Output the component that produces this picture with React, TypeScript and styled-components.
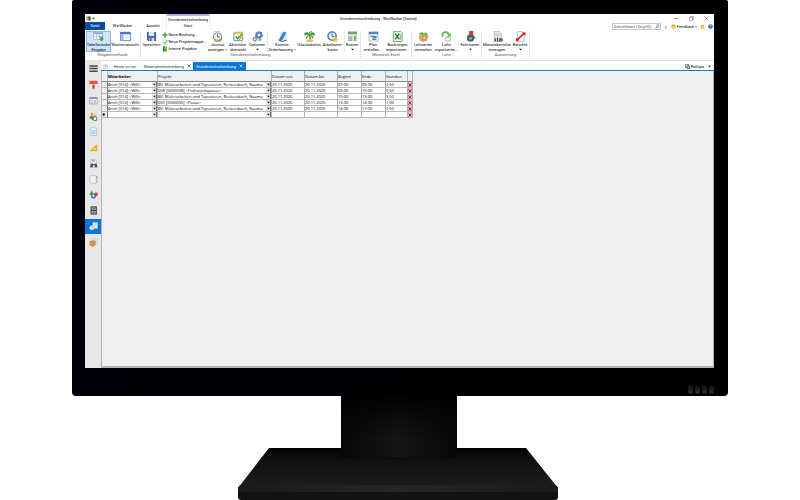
import React from "react";
import styled, { createGlobalStyle } from "styled-components";

const GlobalStyle = createGlobalStyle`
  *, *::before, *::after { box-sizing: border-box; }
  body { margin: 0; background: #fff; }
  button, input, select { font: inherit; color: inherit; margin: 0; padding: 0; border: 0; background: none; border-radius: 0; outline: none; }
  svg { display: block; flex: none; }
`;

const Page = styled.main`
  min-height: 100vh;
  display: flex;
  flex-direction: column;
  align-items: center;
  font: 4px/5px Roboto, "Liberation Sans", sans-serif;
  color: #000;
`;

const Bezel = styled.div`
  width: 82%;
  flex: 1;
  display: flex;
  flex-direction: column;
  padding: 14px 14px 0 13px;
  border-radius: 2px 2px 4px 4px;
  background: linear-gradient(90deg, #00000b 0%, #000005 35%, #000 60%);
`;

const Chin = styled.div`
  height: 28px;
  flex: none;
  display: flex;
  justify-content: flex-end;
  align-items: flex-end;
  gap: 2px;
  padding-bottom: 2px;
`;

const Vent = styled.span`
  width: 5px;
  height: 8px;
  border-radius: 1px;
  border: 1px solid #1c1c1c;
  background: linear-gradient(#111, #333);
`;

const Screen = styled.div`
  flex: 1;
  display: flex;
  flex-direction: column;
  background: #fff;
  overflow: hidden;
`;

const Header = styled.header`
  height: 16px;
  flex: none;
  display: grid;
  grid-template-columns: 6fr auto 7fr;
`;

const HeaderLeft = styled.div`
  display: grid;
  grid-template-columns: 20px 35px 26px 44px;
  grid-template-rows: 8px 8px;
`;

const QuickAccess = styled.div`
  grid-column: 1 / 4;
  display: flex;
  align-items: center;
  gap: 1px;
  padding-left: 1px;
`;

const ContextTitle = styled.div`
  border: 1px solid #eeecf5;
  border-top: 2px solid #b9aee0;
  border-bottom: 0;
  text-align: center;
  white-space: nowrap;
  line-height: 7px;
`;

const RibbonTab = styled.button<{ $kind?: "file" | "active" }>`
  line-height: 8px;
  white-space: nowrap;
  text-align: center;
  background: ${(p) => (p.$kind === "file" ? "#0a4b9c" : "#fff")};
  color: ${(p) => (p.$kind === "file" ? "#fff" : "#000")};
  border: ${(p) => (p.$kind === "active" ? "1px solid #eeecf5" : "0")};
  border-top: 0;
  border-bottom: 0;
`;

const WindowTitle = styled.h1`
  margin: 0;
  font: inherit;
  line-height: 10px;
  white-space: nowrap;
`;

const HeaderRight = styled.div`
  display: flex;
  flex-direction: column;
  align-items: flex-end;
`;

const WindowButtons = styled.div`
  height: 9px;
  display: flex;
  align-items: center;
  gap: 10px;
  padding-right: 5px;
`;

const Tools = styled.div`
  height: 7px;
  display: flex;
  align-items: center;
  gap: 3px;
  padding-right: 1px;
`;

const Search = styled.label`
  width: 49px;
  height: 7px;
  display: flex;
  align-items: center;
  border: 1px solid #c8c8c8;
  input { flex: 1; min-width: 0; height: 5px; padding-left: 1px; }
  input::placeholder { color: #555; opacity: 1; }
`;

const IconButton = styled.button`
  display: flex;
  align-items: center;
  gap: 1px;
  white-space: nowrap;
`;

const Ribbon = styled.div`
  height: 31px;
  flex: none;
  display: flex;
  padding: 1px 0 2px;
  border-bottom: 1px solid #e4e4e4;
`;

const Group = styled.section<{ $width: number }>`
  width: ${(p) => p.$width}px;
  display: flex;
  flex-direction: column;
  border-right: 1px solid #e6e6e6;
`;

const GroupBody = styled.div`
  height: 23px;
  display: flex;
  justify-content: center;
`;

const GroupName = styled.h2`
  margin: 0;
  font: inherit;
  color: #555;
  text-align: center;
  line-height: 6px;
  white-space: nowrap;
`;

const Command = styled.button<{ $width: number; $on?: boolean }>`
  width: ${(p) => p.$width}px;
  display: flex;
  flex-direction: column;
  align-items: center;
  white-space: nowrap;
  background: ${(p) => (p.$on ? "#cfe3f6" : "transparent")};
  box-shadow: ${(p) => (p.$on ? "inset 0 0 0 1px #8fbbe6" : "none")};
`;

const CommandLabel = styled.span`
  height: 5px;
  display: flex;
  align-items: center;
  gap: 1px;
`;

const Divider = styled.span`
  width: 1px;
  background: #e9e9e9;
`;

const CommandList = styled.div`
  width: 45px;
  display: flex;
  flex-direction: column;
`;

const SmallCommand = styled.button`
  height: 7px;
  display: flex;
  align-items: center;
  gap: 1px;
  white-space: nowrap;
`;

const Body = styled.div`
  flex: 1;
  display: flex;
  min-height: 0;
`;

const Sidebar = styled.nav`
  width: 16px;
  flex: none;
  background: #e7e7e7;
`;

const SideList = styled.div`
  height: 189px;
  display: grid;
  grid-template-rows: repeat(12, 1fr);
`;

const SideButton = styled.button<{ $on?: boolean }>`
  display: flex;
  align-items: center;
  justify-content: center;
  background: ${(p) => (p.$on ? "#0878d8" : "transparent")};
`;

const Content = styled.div`
  flex: 1;
  min-width: 0;
  display: flex;
  flex-direction: column;
`;

const TabBar = styled.div`
  height: 10px;
  flex: none;
  display: flex;
  align-items: stretch;
  padding: 1px 0 0 2px;
  border-bottom: 1px solid #1b78c2;
`;

const DocTab = styled.button<{ $on?: boolean; $width: number }>`
  width: ${(p) => p.$width}px;
  display: flex;
  align-items: center;
  justify-content: center;
  gap: 3px;
  white-space: nowrap;
  color: ${(p) => (p.$on ? "#fff" : "#333")};
  background: ${(p) => (p.$on ? "#0878d8" : "transparent")};
`;

const Spacer = styled.span`
  flex: 1;
`;

const Workspace = styled.div`
  flex: 1;
  background: #efefef;
  border: solid #b5b5b5;
  border-width: 0 1px 2px 1px;
`;

const Sheet = styled.table`
  width: 311px;
  font-family: "Open Sans", "Noto Sans", sans-serif;
  table-layout: fixed;
  border-collapse: separate;
  border-spacing: 0;
  th, td {
    padding: 0;
    font-weight: 400;
    text-align: left;
    white-space: nowrap;
    overflow: hidden;
    border-right: 1px solid #b0b0b0;
    border-bottom: 1px solid #b8b8b8;
  }
  thead th { height: 11px; border-bottom-color: #888; }
  thead th:nth-child(2) { font-weight: 700; color: #000; }
  tbody td { height: 6px; background: #fff; }
  tbody th { height: 6px; background: #efefef; border-right-color: #777; }
  tbody td:last-child { background: #c4c4c4; }
`;

const Cell = styled.div`
  height: 5px;
  display: flex;
  align-items: center;
  input, select {
    flex: 1;
    width: 100%;
    min-width: 0;
    height: 5px;
    line-height: 5px;
    appearance: none;
    overflow: hidden;
  }
`;

const DropMark = styled.span`
  width: 5px;
  height: 5px;
  display: flex;
  align-items: center;
  justify-content: center;
  background: #e4e4e4;
  border-right: 1px solid #777;
  pointer-events: none;
`;

const Stand = styled.div`
  height: 104px;
  flex: none;
`;

const G = ({ s = 11, children }: { s?: number; children: React.ReactNode }) => (
  <svg width={s} height={s} viewBox="0 0 24 24" aria-hidden="true" fill="none">
    {children}
  </svg>
);

const Paper = ({ fill = "#fff" }: { fill?: string }) => (
  <path d="M5 1h11l4 4v18H5z" fill={fill} stroke="#9aa7b5" strokeWidth="1.5" />
);

const icons: Record<string, React.ReactNode> = {
  table: (
    <>
      <path d="M1 3h20v15H1z" fill="#fff" stroke="#a7b4d8" strokeWidth="2" />
      <path d="M1 3h20v4H1z" fill="#8fa5e0" />
      <path d="M1 12h20M8 6v12M14 6v12" stroke="#a7b4d8" strokeWidth="1.5" />
      <path d="M16 12h5v5h3l-5.500 6-5.500-6h3z" fill="#36a832" />
    </>
  ),
  week: (
    <>
      <path d="M1 3h22v18H1z" fill="#fff" stroke="#6386d0" strokeWidth="2" />
      <path d="M1 2h22v5H1z" fill="#4a75cf" />
      <path d="M2 7h6v13H2z" fill="#9ebaf0" />
      <path d="M11 11h9M11 15h9" stroke="#c4cee0" strokeWidth="1.500" />
    </>
  ),
  save: (
    <>
      <path d="M2 2h20v20H5l-3-3z" fill="#3f62ad" />
      <path d="M6 2h12v9H6z" fill="#dbe6f8" />
      <path d="M7 15h11v7H7z" fill="#d2d7de" />
      <path d="M9 16h3v6H9z" fill="#334a82" />
    </>
  ),
  plus: <path d="M9 2h6v7h7v6h-7v7H9v-7H2V9h7z" fill="#36a832" />,
  check: (
    <>
      <Paper />
      <path d="M7 12l4 6 10-13" stroke="#31a040" strokeWidth="3.500" />
    </>
  ),
  green: (
    <>
      <path d="M4 2h16v20H4z" fill="#49b52f" />
      <path d="M4 2h5v20H4z" fill="#247e22" />
      <path d="M12 7h5M12 12h5" stroke="#e7ffd9" strokeWidth="2" />
    </>
  ),
  journal: (
    <>
      <Paper />
      <circle cx="12" cy="13" r="9" fill="#eef2f6" stroke="#78828e" strokeWidth="2" />
      <path d="M12 7v6h5" stroke="#375f9d" strokeWidth="2" />
      <path d="M3 15l7 7M16 18h6" stroke="#e59b20" strokeWidth="3" />
      <path d="M12 18l4 4 6-7" stroke="#36a832" strokeWidth="2" />
    </>
  ),
  activity: (
    <>
      <path d="M2 3h19v18H2z" fill="#fff" stroke="#4c8cd8" strokeWidth="2" />
      <path d="M2 2h19v4H2z" fill="#f0b42c" />
      <path d="M6 12l4 5L20 6" stroke="#36a832" strokeWidth="3" />
      <path d="M13 19l9-9" stroke="#e5a52a" strokeWidth="3" />
    </>
  ),
  gears: (
    <>
      <circle cx="15" cy="9" r="6" stroke="#5277b7" strokeWidth="5" strokeDasharray="4 1" />
      <circle cx="15" cy="9" r="5" stroke="#5277b7" strokeWidth="3" />
      <circle cx="6" cy="18" r="3.500" stroke="#74879c" strokeWidth="3" />
      <circle cx="17" cy="19" r="3" fill="#80b34d" />
    </>
  ),
  pen: (
    <>
      <path d="M8 2h13v18H5z" fill="#c8e2f6" />
      <path d="M15 1l5 3-9 16-6 2 1-6z" fill="#2685d0" />
      <path d="M3 19l8 4 10-3" stroke="#2a4d79" strokeWidth="2" />
    </>
  ),
  palm: (
    <>
      <path d="M12 8c2 5 2 9 0 14" stroke="#9b6528" strokeWidth="3" />
      <path d="M12 9C7 0 2 2 0 9c4-2 8-2 12 0-5 0-8 3-7 8 2-4 4-6 7-8 4 2 6 4 7 8 3-5-1-8-7-8 5-2 8-1 12 1-1-8-8-10-12-1 0-4 2-7 5-8-5-1-7 3-5 8z" fill="#3a9d35" stroke="#3a9d35" />
      <path d="M4 20q9-3 17 0l-3 4H7z" fill="#e6c14d" />
    </>
  ),
  clock: (
    <>
      <circle cx="11" cy="11" r="9" fill="#e9f3fc" stroke="#3177bb" strokeWidth="3" />
      <path d="M11 5v7h5" stroke="#315b87" strokeWidth="2" />
      <path d="M18 12l2 4 4 1-3 3 1 4-4-2-5 2 1-4-3-3 5-1z" fill="#f2b92c" />
    </>
  ),
  costs: (
    <>
      <path d="M2 2h20v20H2z" fill="#dfe4df" />
      <path d="M2 1h20v6H2z" fill="#6fa96a" />
      <path d="M3 12h8v10H3z" fill="#939ca0" />
      <path d="M15 11h5v11h-5z" fill="#6fb85c" />
      <path d="M4 15h6M4 19h6" stroke="#eee" strokeWidth="1.500" />
    </>
  ),
  plan: (
    <>
      <path d="M2 2h20v20H2z" fill="#eef3fa" stroke="#b0bdd0" strokeWidth="2" />
      <path d="M2 2h20v5H2z" fill="#4f83c9" />
      <path d="M5 12h8" stroke="#e55431" strokeWidth="3" />
      <path d="M11 11h8v4h-8z" fill="#2f74cf" />
      <path d="M9 18h9" stroke="#249c55" strokeWidth="3" />
    </>
  ),
  excel: (
    <>
      <path d="M3 1h16l3 3v19H3z" fill="#eff8ef" stroke="#60ad67" strokeWidth="2" />
      <path d="M7 6l9 12M16 6L7 18" stroke="#218b3b" strokeWidth="3.500" />
      <path d="M19 7v12" stroke="#7abc7a" strokeWidth="2" />
    </>
  ),
  payType: (
    <>
      <path d="M2 9l10-4 11 4-3 12-9 3-8-4z" fill="#e6a262" />
      <path d="M1 5l9-3 5 6-6 3zM16 2l6 4-5 6-5-5z" fill="#75b45f" />
      <circle cx="14" cy="15" r="4" fill="#f1d3a4" stroke="#cc6d45" strokeWidth="1.500" />
    </>
  ),
  payOut: (
    <>
      <path d="M10 12h13l-2 10-12 1z" fill="#e0e3e2" />
      <path d="M4 12C0 2 12-1 17 7" stroke="#5cba3c" strokeWidth="4" />
      <path d="M21 3v9h-9z" fill="#5cba3c" />
      <ellipse cx="15" cy="18" rx="6" ry="4" fill="#fff" stroke="#9ba39b" strokeWidth="1.500" />
    </>
  ),
  tour: (
    <>
      <circle cx="12" cy="15" r="8" fill="#345b9c" />
      <circle cx="12" cy="16" r="3" fill="#edb246" />
      <path d="M9 1l3 14" stroke="#6a4a36" strokeWidth="2" />
      <path d="M9 0h9v10h-7z" fill="#d8392f" />
      <path d="M18 10l4 6" stroke="#3f9b4b" strokeWidth="3" />
    </>
  ),
  month: (
    <>
      <Paper fill="#eceef1" />
      <path d="M8 6h9M8 10h9" stroke="#a9b2bd" strokeWidth="1.500" />
      <path d="M7 23v-7M12 23v-9M17 23v-7" stroke="#49525d" strokeWidth="3" />
      <circle cx="20" cy="19" r="4" fill="#616a75" />
    </>
  ),
  report: (
    <>
      <Paper />
      <path d="M4 20L21 4" stroke="#dc2323" strokeWidth="3.500" />
      <path d="M15 3h8v8z" fill="#dc2323" />
      <circle cx="5" cy="19" r="3.500" fill="#dc2323" />
    </>
  ),
  menu: <path d="M1 5h22M1 12h22M1 19h22" stroke="#444" strokeWidth="4" />,
  house: (
    <>
      <path d="M1 2h22v9H1z" fill="#e75736" />
      <path d="M5 11h14v11H5z" fill="#f4eee8" />
      <path d="M9 12h6v11H9z" fill="#c2462e" />
    </>
  ),
  calendar: (
    <>
      <path d="M2 4h20v17H2z" fill="#eef2f8" stroke="#8a9ab2" strokeWidth="2" />
      <path d="M2 3h20v5H2z" fill="#8096bd" />
      <path d="M6 12h4M6 17h4" stroke="#7d96bf" strokeWidth="2" />
      <path d="M14 12h4v5h-4z" fill="#d57b72" />
    </>
  ),
  people: (
    <>
      <circle cx="8" cy="5" r="4" fill="#e3a15a" />
      <path d="M1 18q0-9 7-9t7 9z" fill="#b37646" />
      <circle cx="17" cy="10" r="4" fill="#e9b273" />
      <circle cx="16" cy="18" r="5" fill="#fff" stroke="#49a83e" strokeWidth="3" />
      <path d="M5 14l5 6" stroke="#3c6db1" strokeWidth="4" />
    </>
  ),
  doc: (
    <>
      <Paper fill="#e9f4fd" />
      <path d="M8 10h9M8 14h9M8 18h9" stroke="#8ab2d8" strokeWidth="2" />
    </>
  ),
  ruler: (
    <>
      <path d="M22 2v20H1z" fill="#e7b321" />
      <path d="M17 12v6h-6z" fill="#fff3c4" />
    </>
  ),
  binoculars: (
    <>
      <Paper />
      <path d="M8 5h7" stroke="#4f7bb7" strokeWidth="3" />
      <path d="M5 12h6v10H3zM14 12h6l3 10h-8z" fill="#4d5560" />
      <path d="M10 15h6" stroke="#4d5560" strokeWidth="3" />
    </>
  ),
  book: (
    <>
      <path d="M3 2h16v20H3z" fill="#f4f4f4" stroke="#b9bec5" strokeWidth="2" />
      <path d="M21 3v5" stroke="#5b92d7" strokeWidth="3" />
      <path d="M21 9v5" stroke="#e49f4d" strokeWidth="3" />
      <path d="M21 15v5" stroke="#78b26c" strokeWidth="3" />
    </>
  ),
  shapes: (
    <>
      <circle cx="12" cy="16" r="7" fill="#4b83c4" />
      <circle cx="12" cy="15" r="3" fill="#e5eef8" />
      <path d="M7 1l6 12H1z" fill="#2ca045" />
      <path d="M15 7h8v9h-8z" fill="#dd3535" />
    </>
  ),
  cabinet: (
    <>
      <path d="M4 1h17v22H4z" fill="#464646" />
      <path d="M7 4h11v6H7zM7 13h11v7H7z" fill="#b4b4b4" />
      <path d="M10 7h5M10 16h5" stroke="#333" strokeWidth="2" />
    </>
  ),
  timesheet: (
    <>
      <path d="M10 1h13v16H10z" fill="#e6f1fc" stroke="#aac8e8" />
      <path d="M12 6h9M16 2v13" stroke="#87add6" />
      <circle cx="8" cy="15" r="6" fill="#fff" stroke="#adb7c2" strokeWidth="2" />
      <path d="M8 11v4l3 2" stroke="#d34b38" strokeWidth="2" />
    </>
  ),
  box: (
    <>
      <path d="M11 1h12v15H11z" fill="#e4e4e4" stroke="#b6b6b6" />
      <path d="M1 9l9-4 8 3v11l-8 5-9-4z" fill="#e29a58" />
      <path d="M1 9l9 4 8-4M10 13v10" stroke="#b86f34" strokeWidth="1.500" />
    </>
  ),
  grid: (
    <>
      <path d="M3 3h18v18H3z" fill="#f7f7f7" stroke="#aaa" strokeWidth="2" />
      <path d="M7 8h10M12 8v9" stroke="#888" strokeWidth="2" />
    </>
  ),
  rollup: (
    <>
      <path d="M2 2h15v14H2z" fill="#fff" stroke="#444" strokeWidth="3" />
      <path d="M9 9h13v13H9z" fill="#ccc" stroke="#333" strokeWidth="3" />
    </>
  ),
  app: (
    <>
      <path d="M2 2h10v20H2z" fill="#e6a722" />
      <path d="M12 2h10v20H12z" fill="#284a76" />
      <circle cx="11" cy="7" r="4" fill="#3c5e87" />
    </>
  ),
  lens: (
    <>
      <circle cx="14" cy="9" r="6" stroke="#3979c6" strokeWidth="3" />
      <path d="M10 13l-8 9" stroke="#3979c6" strokeWidth="4" />
    </>
  ),
  up: <path d="M4 12l8-8 8 8M8 15h8v6H8z" stroke="#999" strokeWidth="3" />,
  smile: (
    <>
      <circle cx="12" cy="12" r="11" fill="#f5bd2f" />
      <path d="M6 13q6 8 12 0" stroke="#fff" strokeWidth="3" />
      <path d="M8 6v4M16 6v4" stroke="#805a10" strokeWidth="2" />
    </>
  ),
  home: (
    <>
      <path d="M12 1l11 11h-3v11H4V12H1z" fill="#edae35" />
      <path d="M9 13h6v7H9z" fill="#fff3cf" />
    </>
  ),
  help: (
    <>
      <circle cx="12" cy="12" r="11" fill="#2460ac" />
      <path d="M8 9q0-4 4-4t4 4q0 2-4 5M12 16v3" stroke="#fff" strokeWidth="3" />
    </>
  ),
  close: <path d="M4 4l16 16M20 4L4 20" stroke="currentColor" strokeWidth="4" />,
  thinClose: <path d="M2 2l20 20M22 2L2 22" stroke="#888" strokeWidth="3" />,
  min: <path d="M1 12h22" stroke="#888" strokeWidth="4" />,
  max: <path d="M2 7h15v15H2zM7 6V2h15v15h-4" stroke="#888" strokeWidth="3" />,
  caret: <path d="M1 6h22l-11 13z" fill="#222" />,
  remove: (
    <>
      <path d="M0 0h24v24H0z" fill="#d9b9bc" />
      <path d="M4 3l16 18M20 3L4 21" stroke="#c8102e" strokeWidth="6" />
    </>
  ),
};

const Icon = ({ name, size }: { name: string; size?: number }) => <G s={size}>{icons[name]}</G>;

interface CommandItem {
  icon: string;
  lines: string[];
  width: number;
  on?: boolean;
  menu?: boolean;
}

const Cmd = ({ icon, lines, width, on, menu }: CommandItem) => (
  <Command $width={width} $on={on} aria-pressed={on}>
    <Icon name={icon} />
    {lines.map((line, i) => (
      <CommandLabel key={line}>
        {line}
        {menu && i === 1 && <Icon name="caret" size={2} />}
      </CommandLabel>
    ))}
    {menu && lines.length === 1 && (
      <CommandLabel><Icon name="caret" size={3} /></CommandLabel>
    )}
  </Command>
);

const smallCommands = [
  ["plus", "Neue Buchung..."],
  ["check", "Neue Projektmappe..."],
  ["green", "Interne Projekte"],
];

const sideItems: [string, string][] = [
  ["menu", "Menü"],
  ["house", "Start"],
  ["calendar", "Kalender"],
  ["people", "Adressen"],
  ["doc", "Dokumente"],
  ["ruler", "Aufmaß"],
  ["binoculars", "Suche"],
  ["book", "Katalog"],
  ["shapes", "Material"],
  ["cabinet", "Archiv"],
  ["timesheet", "Stundenmitschreibung"],
  ["box", "Lager"],
];

const columns: [string, number][] = [
  ["", 6],
  ["Mitarbeiter", 50],
  ["Projekt", 114],
  ["Datum von", 33],
  ["Datum bis", 33],
  ["Beginn", 24],
  ["Ende", 24],
  ["Stunden", 22],
  ["", 5],
];

const site = "BV. Malerarbeiten und Tapezieren, Reckersbach, Nauma";
const day = "20.11.2020";
const worker = "Arich [014] <Willi>";
const rows = [
  [worker, site, day, day, "07:00", "09:30", "2,50"],
  [worker, "008 [0000008] <Frühstückspause>", day, day, "09:30", "10:00", "0,50"],
  [worker, site, day, day, "10:00", "13:30", "3,50"],
  [worker, "005 [0000005] <Pause>", day, day, "13:30", "14:30", "1,00"],
  [worker, site, day, day, "14:30", "17:00", "2,50"],
  ["", "", "", "", "", "", ""],
];

const TitleArea = () => (
  <Header>
    <HeaderLeft>
      <QuickAccess>
        <Icon name="app" size={5} />
        <Icon name="caret" size={3} />
      </QuickAccess>
      <ContextTitle>Stundenmitschreibung</ContextTitle>
      <RibbonTab $kind="file">Datei</RibbonTab>
      <RibbonTab>WinWorker</RibbonTab>
      <RibbonTab>Ansicht</RibbonTab>
      <RibbonTab $kind="active">Start</RibbonTab>
    </HeaderLeft>
    <WindowTitle>Stundenmitschreibung - WinWorker [Sonne]</WindowTitle>
    <HeaderRight>
      <WindowButtons>
        <IconButton aria-label="Minimieren"><Icon name="min" size={5} /></IconButton>
        <IconButton aria-label="Wiederherstellen"><Icon name="max" size={5} /></IconButton>
        <IconButton aria-label="Schließen"><Icon name="thinClose" size={5} /></IconButton>
      </WindowButtons>
      <Tools>
        <Search>
          <input aria-label="Schnellstart" placeholder="Schnellstart (Strg+Q)" />
          <Icon name="lens" size={5} />
        </Search>
        <IconButton aria-label="Menüband einklappen"><Icon name="up" size={4} /></IconButton>
        <IconButton><Icon name="smile" size={5} />Feedback<Icon name="caret" size={2} /></IconButton>
        <IconButton aria-label="Startseite"><Icon name="home" size={5} /></IconButton>
        <IconButton aria-label="Hilfe"><Icon name="help" size={5} /></IconButton>
      </Tools>
    </HeaderRight>
  </Header>
);

const RibbonArea = () => (
  <Ribbon>
    <Group $width={56}>
      <GroupBody>
        <Cmd icon="table" lines={["Tabellarische", "Eingabe"]} width={25} on />
        <Cmd icon="week" lines={["Wochenansicht"]} width={28} />
      </GroupBody>
      <GroupName>Eingabemethode</GroupName>
    </Group>
    <Group $width={220}>
      <GroupBody>
        <Cmd icon="save" lines={["Speichern"]} width={20} />
        <CommandList>
          {smallCommands.map(([icon, text]) => (
            <SmallCommand key={text}><Icon name={icon} size={6} />{text}</SmallCommand>
          ))}
        </CommandList>
        <Cmd icon="journal" lines={["Journal", "anzeigen"]} width={22} menu />
        <Cmd icon="activity" lines={["Aktivitäts-", "übersicht"]} width={19} />
        <Cmd icon="gears" lines={["Optionen"]} width={19} menu />
        <Divider />
        <Cmd icon="pen" lines={["Externe", "Zeiterfassung"]} width={29} menu />
        <Cmd icon="palm" lines={["Urlaubskonto"]} width={25} />
        <Cmd icon="clock" lines={["Arbeitszeit-", "konto"]} width={22} />
        <Divider />
        <Cmd icon="costs" lines={["Kosten"]} width={15} menu />
      </GroupBody>
      <GroupName>Stundenmitschreibung</GroupName>
    </Group>
    <Group $width={51}>
      <GroupBody>
        <Cmd icon="plan" lines={["Plan", "erstellen..."]} width={23} />
        <Cmd icon="excel" lines={["Buchungen", "importieren..."]} width={26} />
      </GroupBody>
      <GroupName>Microsoft Excel</GroupName>
    </Group>
    <Group $width={70}>
      <GroupBody>
        <Cmd icon="payType" lines={["Lohnarten", "verwalten"]} width={22} />
        <Cmd icon="payOut" lines={["Lohn", "exportieren..."]} width={25} />
        <Cmd icon="tour" lines={["Fahrtionen"]} width={22} menu />
      </GroupBody>
      <GroupName>Lohn</GroupName>
    </Group>
    <Group $width={48}>
      <GroupBody>
        <Cmd icon="month" lines={["Monatsberichte", "erzeugen"]} width={29} />
        <Cmd icon="report" lines={["Berichte"]} width={17} menu />
      </GroupBody>
      <GroupName>Auswertung</GroupName>
    </Group>
  </Ribbon>
);

const TimeSheet = () => (
  <Sheet>
    <colgroup>
      {columns.map(([, width], i) => <col key={i} width={width} />)}
    </colgroup>
    <thead>
      <tr>{columns.map(([name], i) => <th key={i} scope="col">{name}</th>)}</tr>
    </thead>
    <tbody>
      {rows.map((row, r) => (
        <tr key={r}>
          <th scope="row"><Cell>{r === rows.length - 1 ? "✱" : ""}</Cell></th>
          {row.map((value, c) => (
            <td key={c}>
              <Cell>
                {c < 2 ? (
                  <>
                    <select aria-label={columns[c + 1][0]} defaultValue={value}>
                      <option>{value}</option>
                    </select>
                    <DropMark><Icon name="caret" size={3} /></DropMark>
                  </>
                ) : (
                  <input aria-label={columns[c + 1][0]} defaultValue={value} />
                )}
              </Cell>
            </td>
          ))}
          <td><Cell><button aria-label="Zeile löschen"><Icon name="remove" size={4} /></button></Cell></td>
        </tr>
      ))}
    </tbody>
  </Sheet>
);

const MonitorStand = () => (
  <Stand>
    <svg width="324" height="104" viewBox="0 0 324 104" aria-hidden="true">
      <defs>
        <linearGradient id="base" x1="0" y1="0" x2="0" y2="1">
          <stop offset="0" stopColor="#020202" />
          <stop offset="0.3" stopColor="#101010" />
          <stop offset="1" stopColor="#1d1d1d" />
        </linearGradient>
        <linearGradient id="neck" x1="0" x2="1" y1="0" y2="0">
          <stop offset="0" stopColor="#070707" />
          <stop offset="0.5" stopColor="#151515" />
          <stop offset="1" stopColor="#070707" />
        </linearGradient>
        <linearGradient id="shade" x1="0" x2="0" y1="0" y2="1">
          <stop offset="0" stopColor="#000" stopOpacity="0.900" />
          <stop offset="0.7" stopColor="#000" stopOpacity="0" />
        </linearGradient>
        <linearGradient id="edge" x1="0" x2="1" y1="0" y2="0">
          <stop offset="0" stopColor="#1a1a1a" />
          <stop offset="0.5" stopColor="#262626" />
          <stop offset="1" stopColor="#1a1a1a" />
        </linearGradient>
      </defs>
      <path d="M31 52H288L320 92H0z" fill="url(#base)" />
      <path d="M0 91H320V101Q320 104 317 104H3Q0 104 0 101z" fill="#121212" />
      <path d="M0 92L2 89H318L320 92V96H0z" fill="url(#edge)" />
      <path d="M103 0H219V61H103z" fill="url(#neck)" />
      <path d="M103 0H219V61H103z" fill="url(#shade)" />
    </svg>
  </Stand>
);

export default function App() {
  return (
    <>
      <GlobalStyle />
      <Page>
        <Bezel>
          <Screen>
            <TitleArea />
            <RibbonArea />
            <Body>
              <Sidebar aria-label="Module">
                <SideList>
                  {sideItems.map(([icon, label]) => (
                    <SideButton key={icon} aria-label={label} $on={icon === "timesheet"}>
                      <Icon name={icon} size={9} />
                    </SideButton>
                  ))}
                </SideList>
              </Sidebar>
              <Content>
                <TabBar>
                  <IconButton aria-label="Ansicht anheften"><Icon name="grid" size={5} /></IconButton>
                  <DocTab $width={34}>Heute zu tun</DocTab>
                  <DocTab $width={51}>Materialmitschreibung<Icon name="close" size={4} /></DocTab>
                  <DocTab $width={53} $on>Stundenmitschreibung<Icon name="close" size={4} /></DocTab>
                  <Spacer />
                  <IconButton><Icon name="rollup" size={5} />Rollups</IconButton>
                  <DocTab $width={10} aria-label="Weitere Tabs"><Icon name="caret" size={3} /></DocTab>
                </TabBar>
                <Workspace>
                  <TimeSheet />
                </Workspace>
              </Content>
            </Body>
          </Screen>
          <Chin>
            <Vent />
            <Vent />
            <Vent />
            <Vent />
          </Chin>
        </Bezel>
        <MonitorStand />
      </Page>
    </>
  );
}
